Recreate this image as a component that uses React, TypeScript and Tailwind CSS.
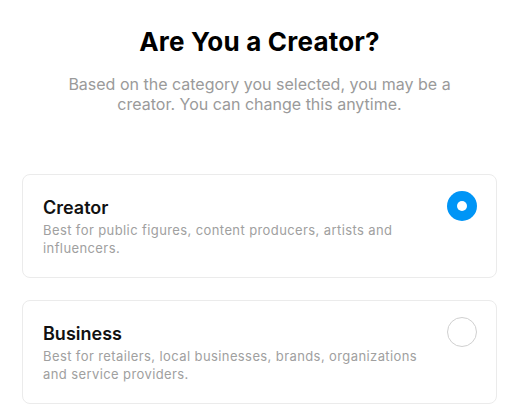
import { useState } from "react";

const options = [
  {
    id: "creator",
    title: "Creator",
    description: "Best for public figures, content producers, artists and influencers.",
  },
  {
    id: "business",
    title: "Business",
    description: "Best for retailers, local businesses, brands, organizations and service providers.",
  },
];

export default function App() {
  const [selected, setSelected] = useState("creator");

  return (
    <div className="min-h-screen bg-white font-['Inter',sans-serif] px-[22px] pt-[26px]">
      <h1 className="text-center text-[26px] leading-8 font-bold tracking-[0.2px] text-black">
        Are You a Creator?
      </h1>
      <p className="mx-auto mt-4 max-w-[400px] text-center text-[16px] leading-5 text-[#9a9a9a]">
        Based on the category you selected, you may be a creator. You can change this anytime.
      </p>

      <div className="mt-[60px] flex flex-col gap-[22px]">
        {options.map((opt) => {
          const active = selected === opt.id;
          return (
            <button
              key={opt.id}
              onClick={() => setSelected(opt.id)}
              className="flex h-[104px] items-start justify-between rounded-lg border border-[#ebebeb] bg-white pl-5 pr-[19px] pt-4 text-left"
            >
              <div className="pt-[5px] pr-6">
                <div className="text-[18px] leading-6 font-semibold text-[#111]">{opt.title}</div>
                <div className="mt-[1px] max-w-[382px] text-[13px] leading-[18px] tracking-[0.4px] text-[#a0a0a0]">
                  {opt.description}
                </div>
              </div>
              {active ? (
                <span className="flex h-[30px] w-[30px] shrink-0 items-center justify-center rounded-full bg-[#0095f6]">
                  <span className="h-[10px] w-[10px] rounded-full bg-white" />
                </span>
              ) : (
                <span className="h-[30px] w-[30px] shrink-0 rounded-full border-[1.5px] border-[#d0d0d0]" />
              )}
            </button>
          );
        })}
      </div>
    </div>
  );
}
